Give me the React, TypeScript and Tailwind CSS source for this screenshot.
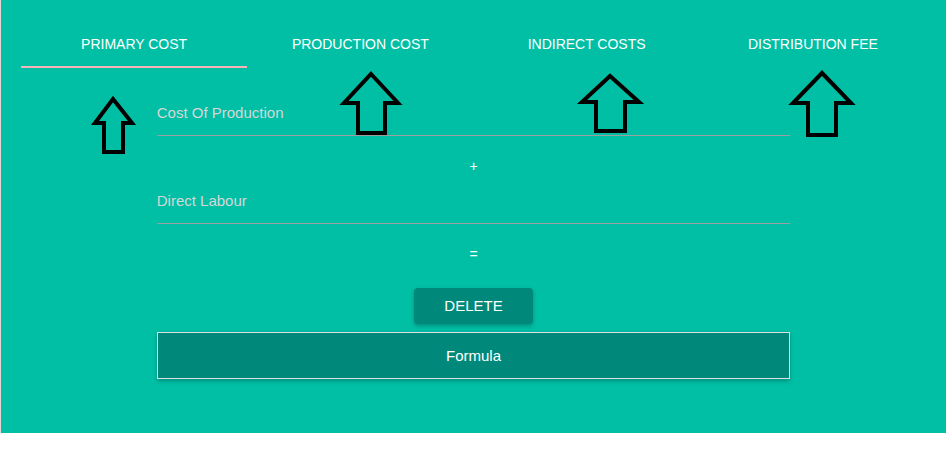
import React from "react";

const tabs = ["Primary Cost", "Production Cost", "Indirect Costs", "Distribution Fee"];

// hand-drawn annotation arrows over the screenshot
const arrows = [
  { tip: [113, 99], wy: 123, wl: 95, wr: 132, sl: 104, sr: 123, b: 152 },
  { tip: [371, 74], wy: 103, wl: 344, wr: 398, sl: 358, sr: 385, b: 133 },
  { tip: [610, 76], wy: 102, wl: 582, wr: 639, sl: 596, sr: 625, b: 131 },
  { tip: [822, 73], wy: 103, wl: 793, wr: 851, sl: 808, sr: 836, b: 135 },
];

function Arrows() {
  return (
    <svg className="absolute left-0 top-0 pointer-events-none" width="946" height="455">
      {arrows.map((a, i) => (
        <polygon
          key={i}
          points={`${a.tip[0]},${a.tip[1]} ${a.wr},${a.wy} ${a.sr},${a.wy} ${a.sr},${a.b} ${a.sl},${a.b} ${a.sl},${a.wy} ${a.wl},${a.wy}`}
          fill="none"
          stroke="#000"
          strokeWidth="4"
          strokeLinejoin="miter"
        />
      ))}
    </svg>
  );
}

export default function App() {
  return (
    <div className="relative min-h-screen bg-white font-['Liberation_Sans',Arial,sans-serif]">
      <div className="h-[433px] bg-[#00bfa5] border-l border-[#e8d4d4] px-5 pt-5">
        <div className="flex h-12">
          {tabs.map((t, i) => (
            <div
              key={t}
              className={
                i === 0
                  ? "flex-1 flex items-center justify-center pt-0.5 border-b-2 border-[#f6b2b5] text-[14px] uppercase text-white"
                  : "flex-1 flex items-center justify-center text-[14px] uppercase text-white"
              }
            >
              {t}
            </div>
          ))}
        </div>

        <div className="mx-auto w-[70%]">
          <div className="mt-[35px] pb-[12px] border-b border-[#9e9e9e]">
            <div className="h-5 leading-5 text-[15px] text-[#d6d6d6]">Cost Of Production</div>
          </div>
          <div className="pt-5 pb-[15px] h-[55px] text-center text-[14px] leading-5 text-white">+</div>
          <div className="pb-[12px] border-b border-[#9e9e9e]">
            <div className="h-5 leading-5 text-[15px] text-[#d6d6d6]">Direct Labour</div>
          </div>
          <div className="pt-5 h-10 text-center text-[14px] leading-5 text-white">=</div>

          <div className="mt-6 flex justify-center">
            <button className="h-9 px-[30px] rounded-sm bg-[#00897b] text-[15px] uppercase text-white shadow-[0_2px_4px_rgba(0,0,0,0.25)]">
              Delete
            </button>
          </div>

          <div className="mt-2 h-[47px] pt-px flex items-center justify-center border border-[#e0e0e0] bg-[#00897b] text-[15px] text-white shadow-[0_2px_4px_rgba(0,0,0,0.25)]">
            Formula
          </div>
        </div>
      </div>
      <Arrows />
    </div>
  );
}
